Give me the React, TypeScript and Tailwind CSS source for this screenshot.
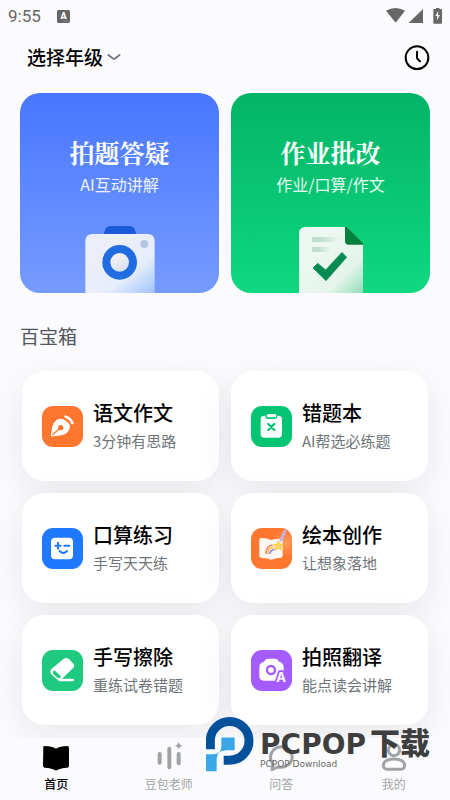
import type { ReactNode } from "react";

const sans = "font-['Noto_Sans_CJK_SC','Noto_Sans',sans-serif]";
const serif = "font-['Noto_Serif_CJK_SC','Noto_Sans_CJK_SC',serif]";

function StatusBar() {
  return (
    <div className="flex h-8 items-center justify-between pr-2 pl-2 text-[#666]">
      <div className="flex items-center gap-4">
        <span className="font-[Roboto,sans-serif] text-[17px] leading-5">9:55</span>
        <svg className="h-[13px] w-[13px]" viewBox="0 0 36 36" aria-hidden="true">
          <rect width="36" height="36" rx="4" fill="#666" />
          <text x="18" y="25" textAnchor="middle" fontFamily="Roboto, sans-serif" fontSize="25" fontWeight="900" fill="#fff">A</text>
          <path d="M18 31h14" stroke="#bbb" strokeWidth="2" strokeDasharray="3 2" />
        </svg>
      </div>
      <svg className="h-[17px] w-14" viewBox="0 0 168 51" fill="#666" aria-hidden="true">
        <path d="M0 8Q28 -8 57 8L29 44Z" />
        <path d="M111 3V45H68Z" />
        <path d="M145 3h5V0h10v3h5q3 0 3 3v38q0 3-3 3h-20q-3 0-3-3V6q0-3 3-3Z" />
        <path d="M157 8l-9 16h6l-2 14 10-17h-6Z" fill="#fbfbfd" />
      </svg>
    </div>
  );
}

function CameraArt() {
  return (
    <svg className="h-[67px] w-[70px]" viewBox="0 0 210 201" aria-hidden="true">
      <defs>
        <linearGradient id="cam" x1="0.35" y1="0.3" x2="1" y2="1">
          <stop offset="0" stopColor="#eceffa" />
          <stop offset="0.5" stopColor="#e6edfb" />
          <stop offset="1" stopColor="#9fc4fc" />
        </linearGradient>
        <linearGradient id="lens" x1="0.3" y1="0" x2="0.7" y2="1">
          <stop offset="0.3" stopColor="#f3f0ee" />
          <stop offset="1" stopColor="#cbdcf6" />
        </linearGradient>
      </defs>
      <path d="M56 28Q60 0 74 0H136Q150 0 154 28Z" fill="#1b5bd8" />
      <path d="M1 201V46Q1 24 23 24H187Q209 24 209 46V201Z" fill="url(#cam)" />
      <circle cx="104" cy="109" r="40" fill="url(#lens)" stroke="#216ce0" strokeWidth="24" />
      <circle cx="178" cy="54" r="12" fill="#b3c6e4" />
    </svg>
  );
}

function PaperArt() {
  return (
    <svg className="h-[66px] w-16" viewBox="0 0 192 198" aria-hidden="true">
      <defs>
        <linearGradient id="paper" x1="0.3" y1="0.3" x2="1" y2="1">
          <stop offset="0" stopColor="#ecf8f1" />
          <stop offset="0.6" stopColor="#e4f5eb" />
          <stop offset="1" stopColor="#95dcb8" />
        </linearGradient>
        <linearGradient id="fade">
          <stop offset="0.3" stopColor="#bfdccf" />
          <stop offset="1" stopColor="#bfdccf" stopOpacity="0" />
        </linearGradient>
      </defs>
      <path d="M0 198V20Q0 0 20 0H138L192 53V198Z" fill="url(#paper)" />
      <path d="M138 0H143L192 49V53H149Q138 53 138 42Z" fill="#00803d" />
      <path d="M39 30H121V45H39Z" fill="url(#fade)" />
      <path d="M39 60H95V75H39Z" fill="url(#fade)" />
      <path d="M42 123L56 109L80 129L129 76L143 91L81 161Z" fill="#048b52" stroke="#048b52" strokeWidth="2" strokeLinejoin="round" />
    </svg>
  );
}

const toolIcons: Record<string, ReactNode> = {
  pen: (
    <>
      <rect width="123" height="123" rx="33" fill="#ff762f" />
      <path d="M28 90L32 64Q35 48 46 42Q54 38 64 41L80 53Q85 60 80 71Q75 83 61 86Z" fill="#fff" stroke="#fff" strokeWidth="3" strokeLinejoin="round" />
      <path d="M31 87L52 68" stroke="#ff762f" strokeWidth="4" />
      <circle cx="56" cy="65" r="8" fill="#ff762f" />
      <path d="M71 32Q85 36 91 51" fill="none" stroke="#fff" strokeWidth="8" strokeLinecap="round" />
    </>
  ),
  clipboard: (
    <>
      <rect width="123" height="123" rx="33" fill="#03c472" />
      <rect x="29" y="29" width="64" height="66" rx="11" fill="#fff" />
      <rect x="43" y="20" width="36" height="19" rx="9" fill="#03c472" />
      <rect x="47" y="24" width="29" height="10" rx="5" fill="#fff" />
      <path d="M52 54L70 72M70 54L52 72" stroke="#03c472" strokeWidth="7" strokeLinecap="round" />
    </>
  ),
  math: (
    <>
      <rect width="123" height="123" rx="33" fill="#1f79ff" />
      <rect x="27" y="29" width="66" height="65" rx="12" fill="#fff" />
      <path d="M40 53H56M48 44V62M67 53H82M53 69Q64 81 75 69" fill="none" stroke="#1f79ff" strokeWidth="6" strokeLinecap="round" />
    </>
  ),
  book: (
    <>
      <defs>
        <radialGradient id="glow" cx="0.85" cy="0.35" r="0.35">
          <stop offset="0" stopColor="#ff9c5c" />
          <stop offset="1" stopColor="#ff762f" />
        </radialGradient>
      </defs>
      <rect width="123" height="123" rx="33" fill="url(#glow)" />
      <path d="M25 35Q25 30 31 30Q49 30 61 36Q75 31 95 33V84Q95 89 88 89Q73 90 61 95Q49 90 32 90Q25 89 25 84Z" fill="#fff7f1" />
      <path d="M45 78Q45 54 65 51" fill="none" stroke="#ff8059" strokeWidth="5" />
      <path d="M51 78Q51 61 68 57" fill="none" stroke="#ffc247" strokeWidth="5" />
      <path d="M57 78Q57 67 71 63" fill="none" stroke="#8587ff" strokeWidth="5" />
      <path d="M83 35L87 47L100 47L90 56L94 69L82 62L70 70L73 56L63 48L76 47Z" fill="#ffd35b" />
      <path d="M102 9L89 37" stroke="#c6aff7" strokeWidth="8" strokeLinecap="round" />
    </>
  ),
  eraser: (
    <>
      <rect width="123" height="123" rx="33" fill="#1fc97f" />
      <path d="M79 29L93 44Q95 48 93 51L57 86Q52 90 46 86L29 70Q26 65 29 60L66 29Q73 24 79 29Z" fill="#fff" stroke="#fff" strokeWidth="5" strokeLinejoin="round" />
      <path d="M38 62L57 80Q51 88 44 81L35 72Q30 66 38 62Z" fill="#1fc97f" stroke="#1fc97f" strokeWidth="2" strokeLinejoin="round" />
      <path d="M52 90H93" stroke="#fff" strokeWidth="7" strokeLinecap="round" />
    </>
  ),
  translate: (
    <>
      <rect width="123" height="123" rx="33" fill="#a45bff" />
      <path d="M25 52Q25 38 39 36Q42 26 52 26H72Q80 26 84 35Q98 38 98 52V80Q98 92 85 92H39Q25 92 25 79Z" fill="#fff" />
      <circle cx="60" cy="60" r="12" fill="#fff" stroke="#a45bff" strokeWidth="7" />
      <text x="90" y="95" textAnchor="middle" fontFamily="Inter, sans-serif" fontSize="39" fontWeight="700" fill="#fff" stroke="#a45bff" strokeWidth="11" strokeLinejoin="round" paintOrder="stroke">A</text>
    </>
  ),
};

const heroes = [
  { title: "拍题答疑", sub: "AI互动讲解", tone: "bg-linear-to-b from-[#4876ff] to-[#769bff]", art: <CameraArt /> },
  { title: "作业批改", sub: "作业/口算/作文", tone: "bg-linear-to-b from-[#03b467] to-[#0fd880]", art: <PaperArt /> },
];

const tools = [
  { icon: "pen", title: "语文作文", sub: "3分钟有思路" },
  { icon: "clipboard", title: "错题本", sub: "AI帮选必练题" },
  { icon: "math", title: "口算练习", sub: "手写天天练" },
  { icon: "book", title: "绘本创作", sub: "让想象落地" },
  { icon: "eraser", title: "手写擦除", sub: "重练试卷错题" },
  { icon: "translate", title: "拍照翻译", sub: "能点读会讲解" },
];

const tabs = [
  {
    label: "首页",
    tone: "text-black font-medium",
    icon: <path d="M4 9Q2 3 8 3Q30 3 42 11Q54 3 76 3Q81 3 81 9V62Q81 67 76 68Q54 69 42 77Q30 69 8 68Q3 67 3 62Z" fill="currentColor" />,
  },
  {
    label: "豆包老师",
    tone: "text-[#a0a3a6]",
    icon: (
      <g fill="currentColor">
        <rect x="8" y="21" width="12" height="38" rx="6" />
        <rect x="37" y="5" width="12" height="68" rx="6" />
        <rect x="65" y="21" width="12" height="40" rx="6" />
        <path d="M71 -10Q73 0 83 2Q73 4 71 14Q69 4 59 2Q69 0 71 -10Z" />
      </g>
    ),
  },
  {
    label: "问答",
    tone: "text-[#a0a3a6]",
    icon: <path d="M42 5A34 31 0 1 1 33 66L15 74L18 57A33 32 0 0 1 42 5Z" fill="none" stroke="currentColor" strokeWidth="9" strokeLinejoin="round" />,
  },
  {
    label: "我的",
    tone: "text-[#a0a3a6]",
    icon: (
      <g fill="none" stroke="currentColor" strokeWidth="9">
        <circle cx="42" cy="15" r="17" />
        <path d="M10 60Q12 42 42 42Q72 42 74 60Q73 73 63 73H21Q11 73 10 60Z" />
      </g>
    ),
  },
];

function Watermark() {
  return (
    <div className="pointer-events-none absolute right-5 bottom-7 flex items-end gap-[6px]">
      <svg className="h-[55px] w-12" viewBox="0 0 144 164" aria-hidden="true">
        <path d="M13 96V71A58 58 0 1 1 71 129H53" fill="none" stroke="#03519b" strokeWidth="27" />
        <path d="M0 111H22Q46 111 46 88V61H86V99H60Q32 101 32 125V162H0Z" fill="#3aa7e6" />
      </svg>
      <div className="whitespace-nowrap">
        <p className="flex h-7 items-baseline text-[28px] leading-[26px] font-bold text-[#333]/95">
          <span className="font-['DejaVu_Sans',sans-serif]">PCPOP</span>
          <span className="ml-1 font-['Noto_Sans_CJK_SC',sans-serif] text-[30px] font-black">下载</span>
        </p>
        <p className="font-['DejaVu_Sans',sans-serif] text-[9px] leading-4 text-[#666]">PCPOP Download</p>
      </div>
    </div>
  );
}

export default function App() {
  return (
    <div className={`flex min-h-screen flex-col bg-[#fbfbfe] ${sans}`}>
      <StatusBar />
      <header className="flex h-[50px] items-center justify-between pr-5 pl-[27px]">
        <button type="button" className="flex items-center gap-1 text-[19px] leading-7 font-medium text-black">
          选择年级
          <svg className="h-2 w-[14px]" viewBox="0 0 42 24" aria-hidden="true">
            <path d="M4 6L19 17Q21 18 23 17L38 6" fill="none" stroke="#6f7377" strokeWidth="5" strokeLinecap="round" />
          </svg>
        </button>
        <button type="button" aria-label="历史记录">
          <svg className="h-[26px] w-[26px]" viewBox="0 0 78 78" fill="none" stroke="#000" strokeWidth="6" strokeLinecap="round" aria-hidden="true">
            <circle cx="39" cy="41" r="34" />
            <path d="M39 23V41Q39 43 41 45L48 52" />
          </svg>
        </button>
      </header>

      <main className="flex-1 overflow-hidden pt-[11px] pb-[13px]">
        <div className="grid grid-cols-2 gap-3 px-5">
          {heroes.map((h) => (
            <button key={h.title} type="button" className={`flex h-[200px] flex-col items-center overflow-hidden rounded-[20px] pt-[43px] text-white ${h.tone}`}>
              <span className={`text-[25px] leading-8 font-bold ${serif}`}>{h.title}</span>
              <span className="mt-1 text-base leading-6 text-white/90">{h.sub}</span>
              <span className="mt-auto">{h.art}</span>
            </button>
          ))}
        </div>

        <section>
          <h2 className="mt-[29px] px-5 text-[19px] leading-7 text-[#50565c]">百宝箱</h2>
          <div className="mt-[21px] grid grid-cols-2 gap-3 px-[22px]">
            {tools.map((t) => (
              <button key={t.title} type="button" className="flex h-[110px] items-center gap-[10px] rounded-[22px] bg-white px-5 text-left shadow-[0_10px_36px_rgba(25,25,40,0.08)]">
                <svg className="h-[41px] w-[41px] shrink-0" viewBox="0 0 123 123" aria-hidden="true">
                  {toolIcons[t.icon]}
                </svg>
                <span className="flex flex-col pb-[2px] whitespace-nowrap">
                  <span className="text-xl leading-8 font-medium text-black">{t.title}</span>
                  <span className="text-[15px] leading-6 text-[#70757a]">{t.sub}</span>
                </span>
              </button>
            ))}
          </div>
        </section>
      </main>

      <nav className="sticky bottom-0 grid grid-cols-4 bg-[#fbfbfd]">
        {tabs.map((t) => (
          <a key={t.label} href="#" className={`flex h-[62px] flex-col items-center gap-px pt-[7px] text-xs leading-5 ${t.tone}`}>
            <svg className="h-7 w-7 overflow-visible" viewBox="0 0 84 84" aria-hidden="true">
              {t.icon}
            </svg>
            {t.label}
          </a>
        ))}
        <Watermark />
      </nav>
    </div>
  );
}
